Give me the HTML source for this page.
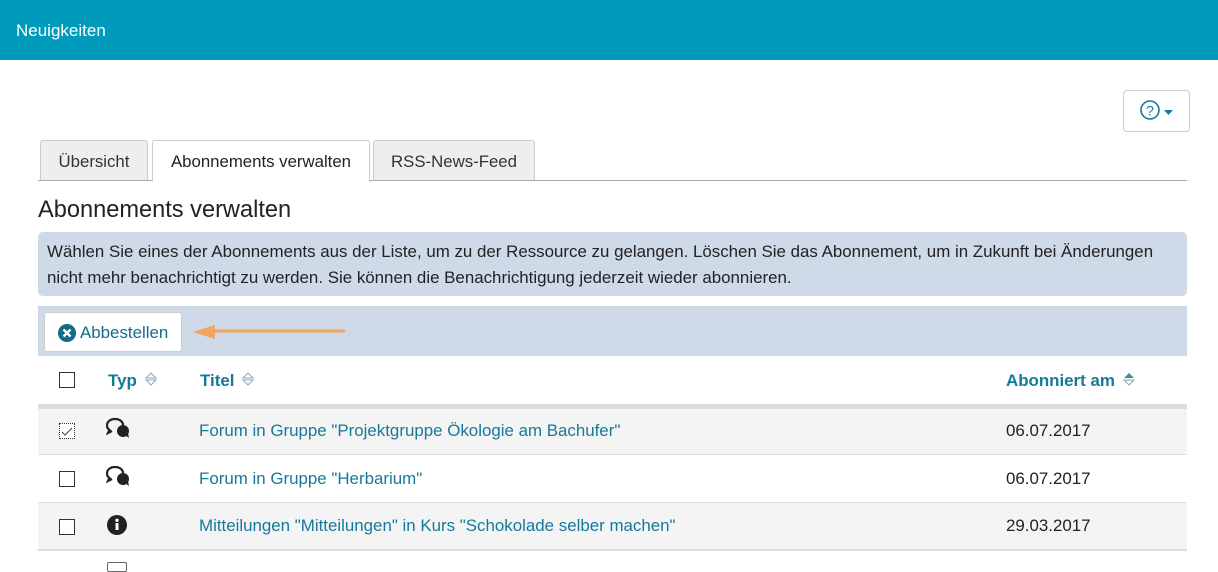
<!DOCTYPE html>
<html><head><meta charset="utf-8"><style>
*{box-sizing:border-box;margin:0;padding:0}
body{width:1218px;height:565px;overflow:hidden;background:#fff;font-family:"Liberation Sans",sans-serif;color:#222;position:relative}
.top{position:absolute;left:0;top:0;width:1218px;height:60px;background:#009bbb;color:#fff;font-size:17px;padding:21px 16px}
.help{position:absolute;left:1123px;top:90px;width:67px;height:42px;border:1px solid #ccc;border-radius:4px}
.tab{position:absolute;top:140px;height:41px;border:1px solid #ccc;border-bottom:none;border-radius:3px 3px 0 0;background:#eee;font-size:16.8px;color:#333;padding:11px 0;text-align:center}
.line{position:absolute;left:38px;top:180px;width:1149px;height:1px;background:#aaa}
h2{position:absolute;left:38px;top:197px;font-size:23.6px;font-weight:normal;color:#222}
.info{position:absolute;left:38px;top:232px;width:1149px;height:64px;background:#cfdae9;border-radius:5px;font-size:16.9px;line-height:26px;padding:7px 9px;color:#222}
.tb{position:absolute;left:38px;top:306px;width:1149px;height:50px;background:#cfdae9}
.btn{position:absolute;left:44px;top:312px;width:138px;height:40px;background:#fff;border:1px solid #ccc;border-radius:3px;font-size:16.9px;color:#146b8a;padding:10px 0 0 35px}
.row{position:absolute;left:38px;width:1149px;font-size:16.9px}
.cb{position:absolute;left:21px;width:16px;height:16px;border:1px solid #333;background:#fff}
a{color:#16799a;text-decoration:none}
.th{font-weight:bold;color:#16799a}
.s{position:absolute}
</style></head><body>
<div class="top">Neuigkeiten</div>
<div class="help"><svg width="67" height="42" style="position:absolute;left:0;top:0"><circle cx="26" cy="19" r="9" fill="none" stroke="#16799a" stroke-width="1.6"/><text x="26" y="24.5" font-size="14" text-anchor="middle" fill="#16799a" font-family="Liberation Sans">?</text><path d="M40 19h9l-4.5 5z" fill="#16799a"/></svg></div>
<div class="tab" style="left:40px;width:108px">Übersicht</div>
<div class="tab" style="left:152px;width:218px;background:#fff;height:42px;z-index:2;color:#222">Abonnements verwalten</div>
<div class="tab" style="left:373px;width:162px">RSS-News-Feed</div>
<div class="line"></div>
<h2>Abonnements verwalten</h2>
<div class="info">Wählen Sie eines der Abonnements aus der Liste, um zu der Ressource zu gelangen. Löschen Sie das Abonnement, um in Zukunft bei Änderungen nicht mehr benachrichtigt zu werden. Sie können die Benachrichtigung jederzeit wieder abonnieren.</div>
<div class="tb"></div>
<div class="btn"><svg width="18" height="18" style="position:absolute;left:13px;top:11px"><circle cx="9" cy="9" r="9" fill="#146b8a"/><path d="M5.5 5.5l7 7M12.5 5.5l-7 7" stroke="#fff" stroke-width="2.4"/></svg>Abbestellen</div>
<svg width="160" height="20" style="position:absolute;left:190px;top:322px"><path d="M155 9H20" stroke="#f4a460" stroke-width="3"/><path d="M3 10l22-7v14z" fill="#f4a460"/></svg>
<div class="row" style="top:356px;height:48px"><div class="cb" style="top:16px"></div>
<span class="th" style="position:absolute;left:70px;top:15px">Typ</span>
<svg class="s" style="left:107px;top:16px" width="12" height="14"><path d="M1 6L6 1l5 5zM1 8l5 5 5-5z" fill="none" stroke="#8aaab5" stroke-width="1"/></svg>
<span class="th" style="position:absolute;left:162px;top:15px">Titel</span>
<svg class="s" style="left:204px;top:16px" width="12" height="14"><path d="M1 6L6 1l5 5zM1 8l5 5 5-5z" fill="none" stroke="#8aaab5" stroke-width="1"/></svg>
<span class="th" style="position:absolute;left:968px;top:15px">Abonniert am</span>
<svg class="s" style="left:1085px;top:16px" width="12" height="14"><path d="M1 6L6 1l5 5z" fill="#4a8a9a"/><path d="M1 8l5 5 5-5z" fill="none" stroke="#8aaab5" stroke-width="1"/></svg></div>
<div class="row" style="top:404px;height:5px;background:#ddd"></div>
<div class="row" style="top:409px;height:46px;background:#f4f4f4;border-bottom:1px solid #ddd"><div class="cb" style="top:14px;border-style:dotted"><svg width="14" height="14"><path d="M2 7l3 3 7-7" fill="none" stroke="#444" stroke-width="1"/></svg></div>
<svg class="s" style="left:68px;top:8px" width="26" height="24"><path d="M9 2C4 2 1 5 1 8.5c0 2 1 3.5 2.5 4.5L2 16l4-2" fill="none" stroke="#222" stroke-width="2.2"/><path d="M9 2c5 0 8 3 8 6" fill="none" stroke="#222" stroke-width="2.2"/><circle cx="17" cy="14" r="6" fill="#222"/><path d="M19 18l4 3-1-5z" fill="#222"/></svg>
<a style="position:absolute;left:161px;top:12px">Forum in Gruppe "Projektgruppe Ökologie am Bachufer"</a><span style="position:absolute;left:968px;top:12px">06.07.2017</span></div>
<div class="row" style="top:455px;height:48px;border-bottom:1px solid #ddd"><div class="cb" style="top:16px"></div>
<svg class="s" style="left:68px;top:10px" width="26" height="24"><path d="M9 2C4 2 1 5 1 8.5c0 2 1 3.5 2.5 4.5L2 16l4-2" fill="none" stroke="#222" stroke-width="2.2"/><path d="M9 2c5 0 8 3 8 6" fill="none" stroke="#222" stroke-width="2.2"/><circle cx="17" cy="14" r="6" fill="#222"/><path d="M19 18l4 3-1-5z" fill="#222"/></svg>
<a style="position:absolute;left:161px;top:14px">Forum in Gruppe "Herbarium"</a><span style="position:absolute;left:968px;top:14px">06.07.2017</span></div>
<div class="row" style="top:503px;height:48px;background:#f4f4f4;border-bottom:2px solid #ddd"><div class="cb" style="top:16px"></div><svg width="20" height="20" style="position:absolute;left:69px;top:12px"><circle cx="10" cy="10" r="10" fill="#222"/><rect x="8.5" y="8" width="3" height="7" fill="#fff"/><circle cx="10" cy="5.3" r="1.7" fill="#fff"/></svg><a style="position:absolute;left:161px;top:13px">Mitteilungen "Mitteilungen" in Kurs "Schokolade selber machen"</a><span style="position:absolute;left:968px;top:13px">29.03.2017</span></div>
<div style="position:absolute;left:107px;top:562px;width:20px;height:10px;border:1px solid #666;border-radius:2px"></div>
</body></html>
